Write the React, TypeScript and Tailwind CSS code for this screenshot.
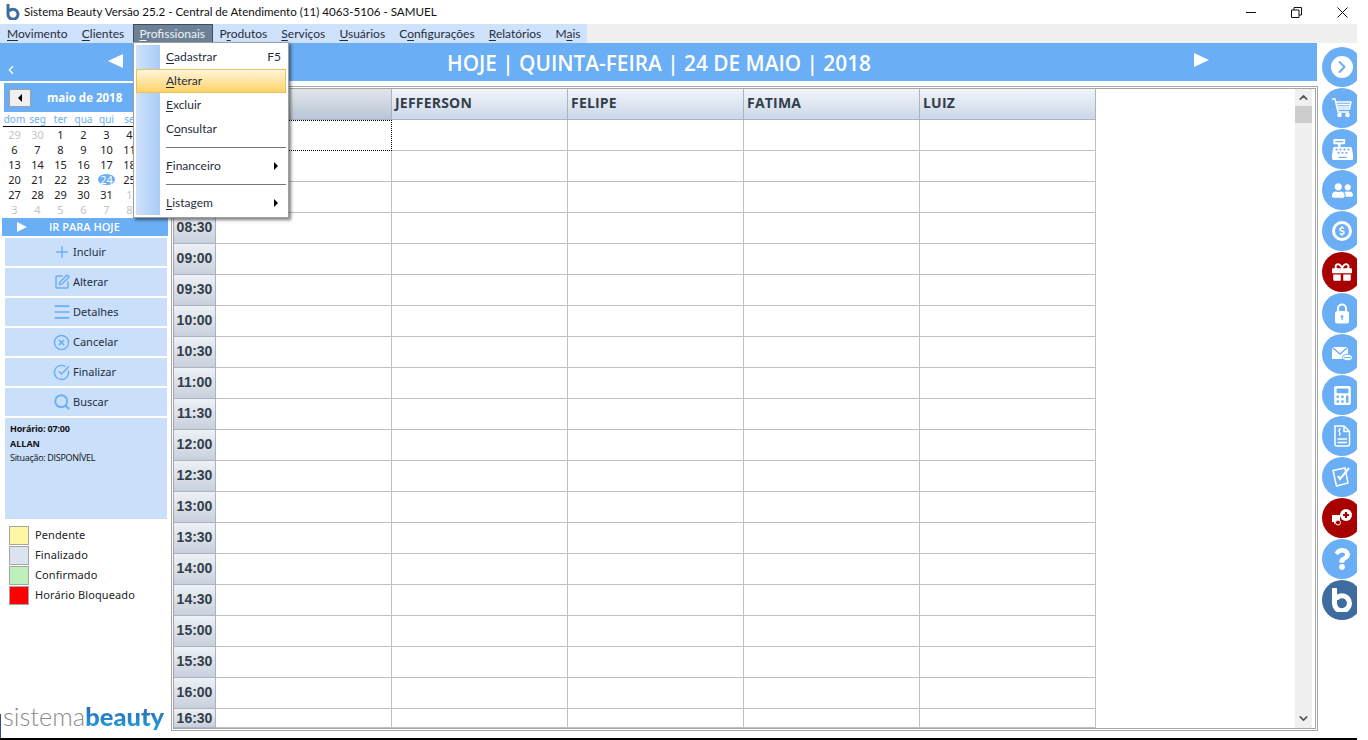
import React from 'react';
import { Plus, SquarePen, Menu as MenuIcon, CircleX, CircleCheckBig, Search, ChevronLeft, ChevronUp, ChevronDown, ChevronRight } from 'lucide-react';
import { FaCashRegister, FaUserFriends, FaGift, FaCalculator, FaQuestion, FaDollarSign } from 'react-icons/fa';

const Logo = ({ size = 16, color = '#3f6c9f', sw = 3 }: { size?: number; color?: string; sw?: number }) => (
  <svg width={size} height={size} viewBox="0 0 16 16" fill="none">
    <path d="M3 1 V10 A5 5 0 1 0 8 5.2 C7 5.2 6 5.5 5 6.2" stroke={color} strokeWidth={sw} strokeLinecap="round" />
  </svg>
);

const U = ({ t, i }: { t: string; i: number }) => (
  <>
    {t.slice(0, i)}
    <span className="underline underline-offset-2">{t[i]}</span>
    {t.slice(i + 1)}
  </>
);

const menus: [string, number][] = [
  ['Movimento', 0], ['Clientes', 0], ['Profissionais', 0], ['Produtos', 1], ['Serviços', 0],
  ['Usuários', 0], ['Configurações', 1], ['Relatórios', 0], ['Mais', 1],
];

const calendar = [
  [['29', 1], ['30', 1], ['1'], ['2'], ['3'], ['4']],
  [['6'], ['7'], ['8'], ['9'], ['10'], ['11']],
  [['13'], ['14'], ['15'], ['16'], ['17'], ['18']],
  [['20'], ['21'], ['22'], ['23'], ['24', 2], ['25']],
  [['27'], ['28'], ['29'], ['30'], ['31'], ['1', 1]],
  [['3', 1], ['4', 1], ['5', 1], ['6', 1], ['7', 1], ['8', 1]],
] as [string, number?][][];

const actions = [
  { label: 'Incluir', icon: <Plus size={18} strokeWidth={2} /> },
  { label: 'Alterar', icon: <SquarePen size={16} strokeWidth={2.2} /> },
  { label: 'Detalhes', icon: <MenuIcon size={20} strokeWidth={2} /> },
  { label: 'Cancelar', icon: <CircleX size={17} strokeWidth={2} /> },
  { label: 'Finalizar', icon: <CircleCheckBig size={17} strokeWidth={2} /> },
  { label: 'Buscar', icon: <Search size={18} strokeWidth={2.4} /> },
];

const legend = [
  ['Pendente', 'bg-[#fff6a5]'],
  ['Finalizado', 'bg-[#dbe3ef]'],
  ['Confirmado', 'bg-[#bdf0ba]'],
  ['Horário Bloqueado', 'bg-[#ff0000]'],
];

const times = ['07:00', '07:30', '08:00', '08:30', '09:00', '09:30', '10:00', '10:30', '11:00', '11:30', '12:00', '12:30', '13:00', '13:30', '14:00', '14:30', '15:00', '15:30', '16:00', '16:30'];
const pros = ['ALLAN', 'JEFFERSON', 'FELIPE', 'FATIMA', 'LUIZ'];

const CartIcon = () => (
  <svg width="22" height="22" viewBox="0 0 22 22" fill="none" stroke="#fff" strokeWidth="1.4">
    <path d="M1 2 H4 L7 15 H18" />
    <path d="M5 5 H20 L18.5 12 H6.5" />
    <path d="M5.8 7.5 H19.5 M6.2 10 H19" />
    <circle cx="8.5" cy="18" r="1.6" fill="#fff" />
    <circle cx="16.5" cy="18" r="1.6" fill="#fff" />
  </svg>
);
const LockIcon = () => (
  <svg width="16" height="21" viewBox="0 0 16 21">
    <path d="M4 9 V5.5 A4 4 0 0 1 12 5.5 V9" fill="none" stroke="#fff" strokeWidth="2" />
    <rect x="1" y="8" width="14" height="12.5" rx="2.5" fill="#fff" />
    <circle cx="8" cy="13.5" r="1.3" fill="#6aaef5" />
    <rect x="7.4" y="14" width="1.2" height="3" fill="#6aaef5" />
  </svg>
);
const MailIcon = () => (
  <svg width="22" height="18" viewBox="0 0 22 18">
    <path d="M1 2 H17 V14 H1 Z" fill="#fff" />
    <path d="M1 2 L9 9 L17 2" fill="none" stroke="#6aaef5" strokeWidth="1.4" />
    <ellipse cx="16.5" cy="12.5" rx="5" ry="3.2" fill="#fff" stroke="#6aaef5" strokeWidth="1" />
    <path d="M13 12.5 H20" stroke="#6aaef5" strokeWidth="1" />
  </svg>
);
const InvoiceIcon = () => (
  <svg width="18" height="22" viewBox="0 0 18 22" fill="none" stroke="#fff" strokeWidth="1.5">
    <path d="M2 1 H11 L16.5 6.5 V19 A2 2 0 0 1 14.5 21 H4 A2 2 0 0 1 2 19 Z" />
    <path d="M11 1 V6.5 H16.5" />
    <path d="M4.5 14 H14 M4.5 17.5 H14" />
    <path d="M8 4 C5 4 5 7 6.5 7.2 C8 7.4 8.5 10 6 10 M6.5 3 V11" strokeWidth="1" />
  </svg>
);
const TabletIcon = () => (
  <svg width="22" height="22" viewBox="0 0 22 22" fill="none" stroke="#fff" strokeWidth="1.5">
    <path d="M2 4.5 L14 2 L17 17 L5.5 20 Z" />
    <path d="M7 10 L9 13 L18 2" strokeWidth="2" />
  </svg>
);
const ChatPlusIcon = () => (
  <svg width="22" height="20" viewBox="0 0 22 20">
    <path d="M1 7 H9 V14 H4.5 L3 16.5 V14 H1 Z" fill="#fff" />
    <circle cx="15" cy="7" r="6" fill="#fff" />
    <path d="M12 7 H18 M15 4 V10" stroke="#a80000" strokeWidth="2.2" />
    <circle cx="7" cy="14.5" r="2.5" fill="#a80000" stroke="#fff" strokeWidth="1" />
  </svg>
);

const rail: { bg: string; icon: React.ReactNode }[] = [
  { bg: 'bg-[#6aaef5]', icon: <span className="w-[22px] h-[22px] rounded-full bg-white flex items-center justify-center text-[#6aaef5]"><ChevronRight size={20} strokeWidth={2.5} /></span> },
  { bg: 'bg-[#6aaef5]', icon: <CartIcon /> },
  { bg: 'bg-[#6aaef5]', icon: <FaCashRegister size={21} /> },
  { bg: 'bg-[#6aaef5]', icon: <FaUserFriends size={21} /> },
  { bg: 'bg-[#6aaef5]', icon: <span className="w-[20px] h-[20px] rounded-full border-[3px] border-white flex items-center justify-center"><FaDollarSign size={10} /></span> },
  { bg: 'bg-[#a80000]', icon: <FaGift size={20} /> },
  { bg: 'bg-[#6aaef5]', icon: <LockIcon /> },
  { bg: 'bg-[#6aaef5]', icon: <MailIcon /> },
  { bg: 'bg-[#6aaef5]', icon: <FaCalculator size={19} /> },
  { bg: 'bg-[#6aaef5]', icon: <InvoiceIcon /> },
  { bg: 'bg-[#6aaef5]', icon: <TabletIcon /> },
  { bg: 'bg-[#a80000]', icon: <ChatPlusIcon /> },
  { bg: 'bg-[#6aaef5]', icon: <FaQuestion size={22} /> },
  { bg: 'bg-[#3f6c9f]', icon: <Logo size={24} color="#ffffff" sw={3.4} /> },
];

const Triangle = ({ dir, className }: { dir: 'l' | 'r'; className?: string }) => (
  <svg width="15" height="14" viewBox="0 0 15 14" className={className}>
    <path d={dir === 'l' ? 'M15 0 V14 L0 7 Z' : 'M0 0 V14 L15 7 Z'} fill="#ffffff" />
  </svg>
);

const ui = "font-['Noto_Sans','Open_Sans',sans-serif]";
const win = "font-['Lato','Open_Sans',sans-serif]";

export default function App() {
  return (
    <div className={`relative w-[1368px] h-[740px] bg-white overflow-hidden text-[#222] ${ui}`}>
      <div className="w-[1357px] h-full flex flex-col">
        {/* Title bar */}
        <div className="h-6 flex items-center shrink-0 bg-white">
          <span className="ml-[5px] w-4 flex"><Logo /></span>
          <span className={`ml-[3px] text-[11.6px] text-[#111] ${win}`}>Sistema Beauty Versão 25.2 - Central de Atendimento (11) 4063-5106 - SAMUEL</span>
          <div className="ml-auto flex items-center gap-[35px] pr-[9px] text-black">
            <span className="w-[10px] h-[1px] bg-[#111]" />
            <svg width="11" height="11" viewBox="0 0 11 11" fill="none" stroke="#111"><path d="M.5 3 H8 V10.5 H.5 Z M3 3 V.5 H10.5 V8 H8" /></svg>
            <svg width="11" height="11" viewBox="0 0 11 11" fill="none" stroke="#111"><path d="M.5 .5 L10.5 10.5 M10.5 .5 L.5 10.5" /></svg>
          </div>
        </div>
        {/* Menu bar */}
        <div className="h-[19px] shrink-0 bg-[#f0f0f0] flex">
          <div className={`flex bg-[#cfe2fb] pl-[1px] pr-[3px] w-[587px] text-[12px] leading-[19px] text-[#1f2d3d] ${win}`}>
            {menus.map(([m, i]) => (
              <span key={m} className={m === 'Profissionais' ? 'shrink-0 ml-[1px] bg-[#6c8196] border border-[#3c4d5c] text-[#eef3f8] leading-[17px] px-[5px] w-[80px]' : 'px-[6px] mr-[2.2px]'}>
                <U t={m} i={i} />
              </span>
            ))}
          </div>
        </div>

        {/* Main */}
        <div className="flex-1 min-h-0 flex">
          <div className="w-[1317px] flex flex-col">
            {/* Date band */}
            <div className="h-[38px] shrink-0 bg-[#6aaef5] flex items-center relative text-white">
              <div className="w-[170px] h-full flex items-start relative shrink-0">
                <ChevronLeft size={14} strokeWidth={2} className="mt-[20px] ml-[4px]" />
                <Triangle dir="l" className="mt-[11px] ml-[90px]" />
              </div>
              <div className="flex-1 flex items-center pl-[277px] mt-[4px]">
                <span className="text-[20.8px] font-semibold font-['Open_Sans',sans-serif] whitespace-nowrap">HOJE | QUINTA-FEIRA | 24 DE MAIO | 2018</span>
                <Triangle dir="r" className="ml-[323px] -mt-[8px]" />
              </div>
            </div>

            <div className="flex-1 min-h-0 flex">
              {/* Sidebar */}
              <div className="w-[170px] shrink-0 flex flex-col relative">
                <div className="mt-[2px] ml-[4px] h-[29px] bg-[#6aaef5] flex items-center shrink-0">
                  <span className="ml-[5px] w-[22px] h-[18px] bg-[#f0f0f0] border border-[#a0a0a0] flex items-center justify-center">
                    <span className="w-0 h-0 border-y-[4px] border-y-transparent border-r-[4px] border-r-black" />
                  </span>
                  <span className="ml-[16px] text-[11.5px] font-bold text-white font-['Open_Sans',sans-serif]">maio de 2018</span>
                </div>
                <div className="ml-[3px] w-[160px] shrink-0">
                  <div className="grid grid-cols-[repeat(6,23px)] h-[15px] border-b border-black text-[10px] leading-[14px] text-[#6aaef5] text-center">
                    {['dom', 'seg', 'ter', 'qua', 'qui', 'se'].map((d) => <span key={d}>{d}</span>)}
                  </div>
                  {calendar.map((row, r) => (
                    <div key={r} className="grid grid-cols-[repeat(6,23px)] h-[15px] text-[11px] leading-[15px] text-center text-[#222]">
                      {row.map(([d, k], c) => (
                        <span key={c} className={k === 1 ? 'text-[#c4c4c4]' : k === 2 ? 'text-white bg-[#6aaef5] rounded-[50%] mx-[3px] my-[2px] leading-[11px]' : ''}>{d}</span>
                      ))}
                    </div>
                  ))}
                </div>
                <div className="mt-[1px] ml-[2px] w-[166px] h-[18px] bg-[#6aaef5] flex items-center text-white shrink-0">
                  <span className="ml-[15px] w-0 h-0 border-y-[5px] border-y-transparent border-l-[10px] border-l-white" />
                  <span className="ml-[22px] text-[11px] font-semibold font-['Open_Sans',sans-serif]">IR PARA HOJE</span>
                </div>
                <div className="mt-[2px] ml-[5px] w-[162px] flex flex-col gap-[2px] shrink-0">
                  {actions.map((a) => (
                    <div key={a.label} className="h-[28px] bg-[#c9dffa] flex items-center text-[11px] text-[#22303f]">
                      <span className="ml-[46px] w-[21px] text-[#6aaef5] flex justify-center">{a.icon}</span>
                      <span className="ml-[1px]">{a.label}</span>
                    </div>
                  ))}
                </div>
                <div className="mt-[2px] ml-[5px] w-[162px] h-[101px] bg-[#c9dffa] pl-[5px] pt-[3px] text-[9px] text-[#111] leading-[15px] shrink-0 font-['Open_Sans',sans-serif]">
                  <div className="font-bold text-[9px] tracking-[-0.2px]">Horário: 07:00</div>
                  <div className="font-bold">ALLAN</div>
                  <div className="tracking-[-0.3px] -mt-[1px]">Situação: DISPONÍVEL</div>
                </div>
                <div className="mt-[6px] ml-[9px] flex flex-col shrink-0 text-[11px] text-[#222] tracking-[0.1px]">
                  {legend.map(([l, c]) => (
                    <div key={l} className="h-[20px] flex items-center gap-[6px]">
                      <span className={`w-[20px] h-[19px] border border-[#a5a5a5] ${c}`} />
                      <span>{l}</span>
                    </div>
                  ))}
                </div>
                <div className="mt-auto mb-[8px] ml-[3px] flex items-baseline leading-[28px] h-[28px] whitespace-nowrap font-['Lato',sans-serif]">
                  <span className="text-[25.5px] font-light text-[#8c8c8c]">sistema</span>
                  <span className="text-[25.5px] font-black bg-gradient-to-b from-[#2a5fa8] to-[#1fa0dd] bg-clip-text text-transparent">beauty</span>
                </div>
                <span className="absolute left-0 bottom-0 w-[1px] h-[24px] bg-[#2a4f7a]" />
              </div>

              {/* Agenda */}
              <div className="flex-1 min-w-0 mt-[7px] ml-[3px] mb-[9px] mr-[1px] border border-[#a5a5a5] outline outline-1 outline-offset-1 outline-[#a5a5a5] flex font-['Liberation_Sans',sans-serif] bg-white">
                <div className="flex-1 min-w-0 overflow-hidden">
                  <div className="flex h-[31px]">
                    <div className="w-[42px] shrink-0 bg-gradient-to-b from-[#eef2f7] to-[#c6d0dd] border-b border-[#aab4c0]" />
                    {pros.map((p, k) => (
                      <div key={p} className={`w-[176px] shrink-0 border-r border-b border-[#aab4c0] bg-gradient-to-b flex items-center pl-[3px] pb-[3px] text-[14px] font-bold tracking-[0.2px] text-[#333e4a] font-['Open_Sans',sans-serif] ${k === 0 ? 'from-[#e2e6ea] to-[#b9c6d6]' : 'from-[#f2f5fa] to-[#cbd8e8]'}`}>{p}</div>
                    ))}
                  </div>
                  {times.map((t, i) => {
                    const last = i === times.length - 1;
                    return (
                      <div key={t} className={`flex ${last ? 'h-[19px]' : 'h-[31px]'}`}>
                        <div className={`w-[42px] shrink-0 bg-gradient-to-b from-[#eef1f6] to-[#c8d0dc] border-r border-b border-[#aab4c0] flex ${last ? 'items-center' : 'items-end pb-[5px]'} justify-center text-[14px] font-bold text-[#333e4a]`}>{t}</div>
                        {pros.map((p, k) => (
                          <div key={p} className={`w-[176px] shrink-0 ${i === 0 && k === 0 ? 'border border-dotted border-black' : 'border-r border-b border-[#c0c0c0]'}`} />
                        ))}
                      </div>
                    );
                  })}
                </div>
                <div className="w-[17px] mr-[3px] shrink-0 bg-[#f0f0f0] flex flex-col items-center text-[#555]">
                  <ChevronUp size={13} strokeWidth={3} className="mt-[2px]" />
                  <div className="w-full h-[17px] mt-[2px] bg-[#cdcdcd]" />
                  <ChevronDown size={13} strokeWidth={3} className="mt-auto mb-[3px]" />
                </div>
              </div>
            </div>
          </div>

          {/* Rail */}
          <div className="flex-1 min-w-0 overflow-hidden pt-[4px] pl-[5px] flex flex-col gap-[1px]">
            {rail.map((r, i) => (
              <div key={i} className={`w-[40px] h-[40px] shrink-0 rounded-full text-white flex items-center justify-center ${r.bg}`}>{r.icon}</div>
            ))}
          </div>
        </div>
        <div className="h-[2px] shrink-0 bg-black" />
      </div>

      {/* Dropdown menu */}
      <div className={`absolute left-[133px] top-[42px] w-[156px] h-[176px] bg-white border border-[#a0a0a0] shadow-[2px_2px_3px_rgba(0,0,0,0.5)] p-[2px] text-[12px] text-[#1f2d3d] ${win}`}>
        <div className="relative w-full h-full">
          <div className="absolute left-0 top-0 bottom-0 w-[24px] bg-gradient-to-r from-[#cfe2fb] to-[#a8ccf7]" />
          <div className="relative flex flex-col">
            {[
              { t: 'Cadastrar', i: 0, k: 'F5' },
              { t: 'Alterar', i: 0, on: true },
              { t: 'Excluir', i: 0 },
              { t: 'Consultar', i: 1 },
              { sep: true },
              { t: 'Financeiro', i: 0, sub: true },
              { sep: true },
              { t: 'Listagem', i: 0, sub: true },
            ].map((m, idx) =>
              m.sep ? (
                <div key={idx} className="ml-[30px] h-[13px] flex items-center"><span className="w-full h-[1px] bg-[#777]" /></div>
              ) : (
                <div key={idx} className={`h-[24px] flex items-center pr-[5px] ${m.on ? 'border border-[#e5c365] bg-gradient-to-b from-[#fff5d8] to-[#ffd264] pl-[29px]' : 'pl-[30px]'}`}>
                  <span><U t={m.t!} i={m.i!} /></span>
                  {m.k && <span className="ml-auto">{m.k}</span>}
                  {m.sub && <span className="ml-auto mr-[3px] w-0 h-0 border-y-[4px] border-y-transparent border-l-[4px] border-l-black" />}
                </div>
              )
            )}
          </div>
        </div>
      </div>
    </div>
  );
}
